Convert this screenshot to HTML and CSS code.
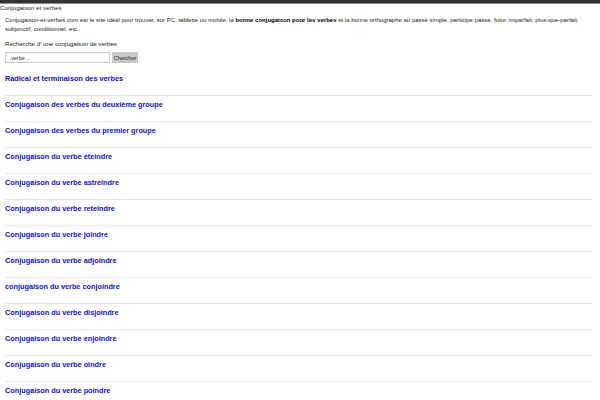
FILE: index.html
```html
<!DOCTYPE html>
<html lang="fr">
<head>
<meta charset="utf-8">
<title>Conjugaison et verbes</title>
<link rel="stylesheet" href="styles.css">
</head>
<body>
<div class="topbar"></div>
<div class="site-title">Conjugaison et verbes</div>
<div class="content">
  <p class="intro">Conjugaison-et-verbes.com est le site idéal pour trouver, sur PC, tablette ou mobile, la <b>bonne conjugaison pour les verbes</b> et la bonne orthographe au passé simple, participe passé, futur, imparfait, plus-que-parfait, subjonctif, conditionnel, etc..</p>
  <p class="label">Recherche d' une conjugaison de verbes</p>
  <form class="search">
    <input class="search-input" type="text" placeholder="verbe ...">
    <button class="search-btn" type="button">Chercher</button>
  </form>
  <ul class="list">
    <li><a href="#">Radical et terminaison des verbes</a></li>
    <li><a href="#">Conjugaison des verbes du deuxième groupe</a></li>
    <li><a href="#">Conjugaison des verbes du premier groupe</a></li>
    <li><a href="#">Conjugaison du verbe éteindre</a></li>
    <li><a href="#">Conjugaison du verbe astreindre</a></li>
    <li><a href="#">Conjugaison du verbe reteindre</a></li>
    <li><a href="#">Conjugaison du verbe joindre</a></li>
    <li><a href="#">Conjugaison du verbe adjoindre</a></li>
    <li><a href="#">conjugaison du verbe conjoindre</a></li>
    <li><a href="#">Conjugaison du verbe disjoindre</a></li>
    <li><a href="#">Conjugaison du verbe enjoindre</a></li>
    <li><a href="#">Conjugaison du verbe oindre</a></li>
    <li><a href="#">Conjugaison du verbe poindre</a></li>
  </ul>
</div>
</body>
</html>
```

FILE: styles.css
```css
html, body {
  margin: 0;
  padding: 0;
  background: #fff;
}
body {
  font-family: "Liberation Sans", Arial, sans-serif;
  font-size: 6.2px;
  color: #222;
}
.topbar {
  height: 3px;
  background: #333;
  border-bottom: 1px solid #8a8a8a;
}
.site-title {
  line-height: 8px;
  color: #222;
}
.content {
  padding: 0 8px 0 5px;
}
.intro {
  margin: 4px 0 0;
  font-size: 6px;
  line-height: 9px;
}
.intro b {
  color: #000;
}
.label {
  margin: 5px 0 0;
  line-height: 9px;
}
.search {
  display: flex;
  gap: 2px;
  margin-top: 4px;
}
.search-input {
  box-sizing: border-box;
  width: 105px;
  height: 11px;
  border: 1px solid #ccc;
  padding: 0 5px;
  font: 5.5px "Liberation Sans", Arial, sans-serif;
  color: #333;
}
.search-input::placeholder {
  color: #333;
}
.search-btn {
  box-sizing: border-box;
  width: 26px;
  height: 11px;
  border: none;
  padding: 0;
  background: #c8c8c8;
  font: 5.5px "Liberation Sans", Arial, sans-serif;
  color: #222;
}
.list {
  list-style: none;
  margin: 7px 0 0;
  padding: 0;
}
.list li {
  padding: 4px 0 11px;
  font-size: 7.3px;
  line-height: 10px;
  height: 10px;
  border-bottom: 1px solid #e8e8e8;
}
.list a {
  font-size: 7.3px;
  font-weight: bold;
  color: #1010cc;
  text-decoration: none;
}
```
